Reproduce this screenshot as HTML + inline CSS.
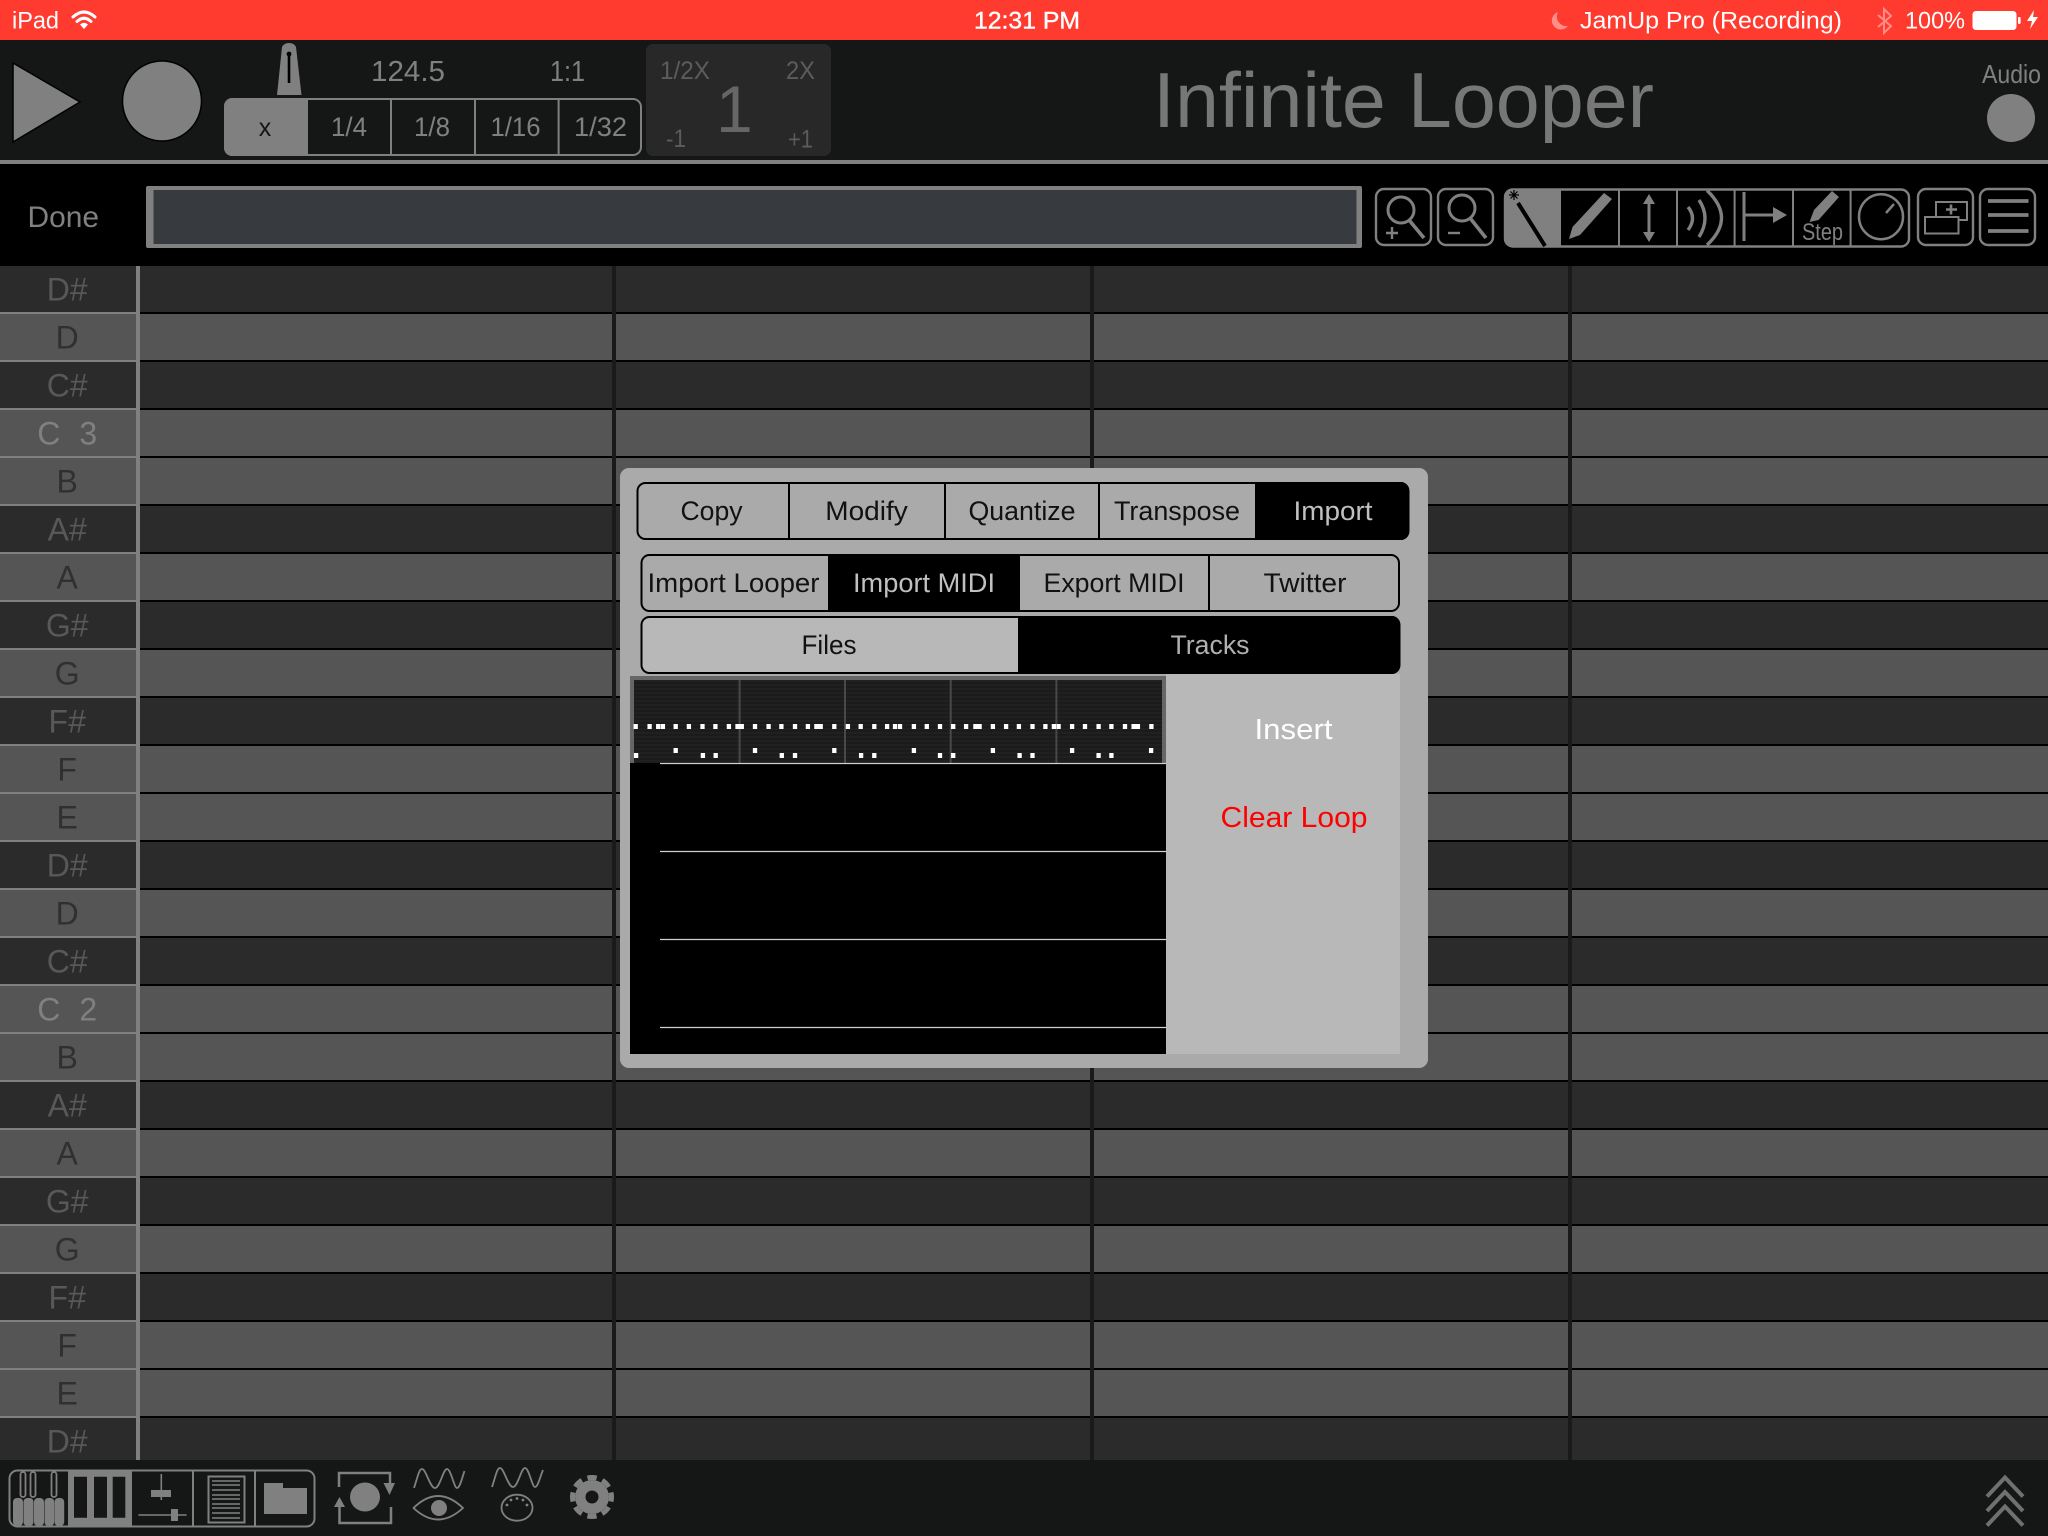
<!DOCTYPE html>
<html lang="en">
<head>
<meta charset="utf-8">
<title>Infinite Looper</title>
<style>
html,body{margin:0;padding:0;width:2048px;height:1536px;overflow:hidden;background:#000}
svg{display:block;position:absolute;left:0;top:0}
text{font-family:"Liberation Sans",sans-serif}
.g{fill:#808080}
.st{fill:none;stroke:#808080}
.m{text-anchor:middle}
</style>
</head>
<body>
<svg width="2048" height="1536" viewBox="0 0 2048 1536" xmlns="http://www.w3.org/2000/svg">
<defs>
<pattern id="sep" patternUnits="userSpaceOnUse" x="0" y="312" width="16" height="48"><rect width="16" height="2" fill="#000"/></pattern>
<pattern id="sepg" patternUnits="userSpaceOnUse" x="0" y="312" width="16" height="48"><rect width="16" height="2" fill="#808080"/></pattern>
<pattern id="tex" patternUnits="userSpaceOnUse" x="0" y="680" width="6" height="4"><rect width="6" height="4" fill="#1b1b1b"/><rect width="6" height="2" fill="#202020"/></pattern>
</defs>

<!-- status bar -->
<rect width="2048" height="40" fill="#ff3b30"/>
<g fill="#fff" font-size="24">
<text x="12" y="28.500" textLength="47" lengthAdjust="spacingAndGlyphs">iPad</text>
<text x="974" y="28.500" textLength="106" lengthAdjust="spacingAndGlyphs" style="stroke:#fff;stroke-width:.4">12:31 PM</text>
<text x="1580" y="28.500" textLength="262" lengthAdjust="spacingAndGlyphs">JamUp Pro (Recording)</text>
<text x="1905" y="28.500" textLength="60" lengthAdjust="spacingAndGlyphs">100%</text>
</g>
<g fill="none" stroke="#fff" stroke-width="3" stroke-linecap="round">
<path d="M73 17Q84 7 95 17"/><path d="M77 21.500Q84 15 91 21.500"/>
</g>
<path d="M80 24.500Q84 21 88 24.500L84 29Z" fill="#fff"/>
<path d="M1558 12A9 9 0 1 0 1568 26A9.500 9.500 0 0 1 1558 12Z" fill="#ff8f88"/>
<path d="M1878 15L1891 26L1884 33V9L1891 16L1878 27" fill="none" stroke="#ff8f88" stroke-width="2"/>
<rect x="1973" y="11.500" width="43" height="18" rx="3" fill="#fff" stroke="#fff"/>
<rect x="2018" y="17" width="2.600" height="7" rx="1" fill="#fff"/>
<path d="M2034 10L2027 21H2032L2030 29L2038 17H2033Z" fill="#fff"/>

<!-- header -->
<rect y="40" width="2048" height="120" fill="#151616"/>
<rect y="160" width="2048" height="4" fill="#808080"/>
<path d="M13 63L80 102L13 142Z" class="g" stroke="#000" stroke-width="1.500"/>
<ellipse cx="162" cy="101" rx="39.500" ry="40" class="g" stroke="#000" stroke-width="1.500"/>
<path d="M277 95L282 47Q284 43 289 43Q294 43 296 47L301.500 95Z" class="g"/>
<path d="M289 53V83" stroke="#000" stroke-width="2.600" fill="none"/>
<circle cx="289" cy="54" r="2.400" fill="#000"/>
<g class="g" font-size="29">
<text x="371" y="81" textLength="74" lengthAdjust="spacingAndGlyphs">124.5</text>
<text x="550" y="81" textLength="35" lengthAdjust="spacingAndGlyphs">1:1</text>
</g>
<rect x="225" y="99" width="416" height="56" rx="8" fill="#151616" stroke="#808080" stroke-width="2"/>
<path d="M308 98H232a8 8 0 0 0 -8 8V148a8 8 0 0 0 8 8H308Z" class="g"/>
<path d="M391 99V155M475 99V155M558.600 99V155" stroke="#808080" stroke-width="2"/>
<g class="g m" font-size="27">
<text x="265" y="136" style="fill:#151616" font-size="25">x</text>
<text x="349" y="136" textLength="36" lengthAdjust="spacingAndGlyphs">1/4</text>
<text x="432" y="136" textLength="36" lengthAdjust="spacingAndGlyphs">1/8</text>
<text x="515.500" y="136" textLength="50" lengthAdjust="spacingAndGlyphs">1/16</text>
<text x="600.500" y="136" textLength="53" lengthAdjust="spacingAndGlyphs">1/32</text>
</g>
<rect x="646" y="44" width="185" height="112" rx="7" fill="#282828"/>
<g fill="#5c5c5c" font-size="25">
<text x="660" y="79" textLength="50" lengthAdjust="spacingAndGlyphs">1/2X</text>
<text x="786" y="79" textLength="29" lengthAdjust="spacingAndGlyphs">2X</text>
<text x="666" y="147" textLength="20" lengthAdjust="spacingAndGlyphs">-1</text>
<text x="788" y="147.500" textLength="25" lengthAdjust="spacingAndGlyphs">+1</text>
<text x="716" y="132" font-size="66" style="fill:#666">1</text>
</g>
<text x="1153" y="127" font-size="78" fill="#777" textLength="501" lengthAdjust="spacingAndGlyphs">Infinite Looper</text>
<text x="1982" y="83" font-size="26" class="g" textLength="59" lengthAdjust="spacingAndGlyphs">Audio</text>
<ellipse cx="2011" cy="118" rx="24" ry="24" class="g"/>

<!-- toolbar row -->
<rect y="164" width="2048" height="102" fill="#000"/>
<text x="27.500" y="227" font-size="30" class="g" textLength="71.500" lengthAdjust="spacingAndGlyphs">Done</text>
<rect x="146" y="186" width="1216" height="62" rx="2" fill="#808080"/>
<rect x="153.500" y="190" width="1203" height="54" fill="#373b3f"/>

<!-- zoom + -->
<rect x="1376" y="189" width="55" height="56" rx="8" class="st" stroke-width="2.400"/>
<circle cx="1401" cy="210" r="13" class="st" stroke-width="3"/>
<path d="M1409 220L1424 238" class="st" stroke-width="3.600"/>
<path d="M1386 233H1398M1392 227V239" class="st" stroke-width="2.400"/>
<!-- zoom - -->
<rect x="1438" y="189" width="55" height="56" rx="8" class="st" stroke-width="2.400"/>
<circle cx="1462" cy="208" r="13" class="st" stroke-width="3"/>
<path d="M1470 218L1486 238" class="st" stroke-width="3.600"/>
<path d="M1448 233H1460" class="st" stroke-width="2.400"/>
<!-- tool segment -->
<rect x="1505" y="189.500" width="404" height="57" rx="8" fill="#000" stroke="#808080" stroke-width="2.400"/>
<path d="M1561 188.500H1512a8 8 0 0 0 -8 8V239a8 8 0 0 0 8 8H1561Z" class="g"/>
<path d="M1619 189V247M1677 189V247M1734.600 189V247M1793 189V247M1850.600 189V247" stroke="#808080" stroke-width="2"/>
<path d="M1518 203L1545 246" stroke="#000" stroke-width="4" fill="none"/>
<path d="M1514 190V200M1509 195H1519M1510.500 191.500L1517.500 198.500M1517.500 191.500L1510.500 198.500" stroke="#000" stroke-width="1.200" fill="none"/>
<path d="M1604 193L1612 199L1580 235L1569 239L1572.500 227Z" class="g"/>
<path d="M1649 200V236" class="st" stroke-width="3"/>
<path d="M1649 194L1655 204H1643ZM1649 242L1655 232H1643Z" class="g"/>
<path d="M1688 207Q1697 218 1688 230" class="st" stroke-width="3.400"/>
<path d="M1699 200Q1711 218 1699 237" class="st" stroke-width="3.400"/>
<path d="M1707 190.500Q1736 218 1707 245" class="st" stroke-width="3.400"/>
<path d="M1744 192V241" class="st" stroke-width="3"/>
<path d="M1744 215H1774" class="st" stroke-width="3"/>
<path d="M1773 207L1787 215L1773 223Z" class="g"/>
<path d="M1832 191L1839 197L1818.500 220L1809.500 222L1814 210Z" class="g"/>
<text x="1802" y="240" font-size="24" class="g" textLength="41" lengthAdjust="spacingAndGlyphs">Step</text>
<ellipse cx="1881" cy="216.700" rx="22" ry="22.500" class="st" stroke-width="2.500"/>
<path d="M1886 213L1894 204" class="st" stroke-width="2.500"/>
<!-- add -->
<rect x="1918" y="189" width="55" height="56" rx="8" class="st" stroke-width="2.400"/>
<rect x="1936" y="202" width="31" height="18" class="st" stroke-width="2"/>
<path d="M1946 209.500H1957M1951 204.500V214.500" class="st" stroke-width="2.600"/>
<rect x="1925" y="217" width="33.500" height="16.500" fill="#000" stroke="#808080" stroke-width="2"/>
<!-- menu -->
<rect x="1980" y="189" width="55" height="56" rx="8" class="st" stroke-width="2.400"/>
<path d="M1988 201H2028.500M1988 215H2028.500M1988 231H2028.500" class="st" stroke-width="3.800"/>

<!-- grid -->
<rect y="266" width="2048" height="1194" fill="#2b2b2b"/>
<g fill="#555">
<rect y="314" width="2048" height="46"/><rect y="410" width="2048" height="46"/><rect y="458" width="2048" height="46"/>
<rect y="554" width="2048" height="46"/><rect y="650" width="2048" height="46"/><rect y="746" width="2048" height="46"/>
<rect y="794" width="2048" height="46"/><rect y="890" width="2048" height="46"/><rect y="986" width="2048" height="46"/>
<rect y="1034" width="2048" height="46"/><rect y="1130" width="2048" height="46"/><rect y="1226" width="2048" height="46"/>
<rect y="1322" width="2048" height="46"/><rect y="1370" width="2048" height="46"/>
</g>
<rect x="140" y="312" width="1908" height="1106" fill="url(#sep)"/>
<rect x="0" y="312" width="136" height="1106" fill="url(#sepg)"/>
<rect x="136" y="266" width="4" height="1194" fill="#808080"/>
<path d="M614 266V1460M1092 266V1460M1570 266V1460" stroke="#1a1a1a" stroke-width="4"/>

<g font-size="32" class="m" transform="translate(-0.800,-0.600)">
<g fill="#585858">
<text x="68" y="301">D#</text><text x="68" y="397">C#</text><text x="68" y="541">A#</text><text x="68" y="637">G#</text><text x="68" y="733">F#</text>
<text x="68" y="877">D#</text><text x="68" y="973">C#</text><text x="68" y="1117">A#</text><text x="68" y="1213">G#</text><text x="68" y="1309">F#</text><text x="68" y="1453">D#</text>
</g>
<g fill="#303030">
<text x="68" y="349">D</text><text x="68" y="493">B</text><text x="68" y="589">A</text><text x="68" y="685">G</text><text x="68" y="781">F</text><text x="68" y="829">E</text>
<text x="68" y="925">D</text><text x="68" y="1069">B</text><text x="68" y="1165">A</text><text x="68" y="1261">G</text><text x="68" y="1357">F</text><text x="68" y="1405">E</text>
</g>
<g fill="#808080">
<text x="68" y="445" textLength="60" lengthAdjust="spacing">C&#160;&#160;3</text>
<text x="68" y="1021" textLength="60" lengthAdjust="spacing">C&#160;&#160;2</text>
</g>
</g>

<!-- modal -->
<rect x="620" y="468" width="808" height="600" rx="9" fill="#aaa"/>
<!-- seg1 -->
<rect x="637.500" y="483" width="771" height="56" rx="8" fill="#aaa" stroke="#000" stroke-width="2"/>
<path d="M1255 482H1401a8 8 0 0 1 8 8V532a8 8 0 0 1 -8 8H1255Z" fill="#000"/>
<path d="M789 483V539M945 483V539M1099 483V539" stroke="#000" stroke-width="2"/>
<g font-size="27" fill="#111" class="m">
<text x="711.500" y="520" textLength="62" lengthAdjust="spacingAndGlyphs">Copy</text>
<text x="866.500" y="520" textLength="82.500" lengthAdjust="spacingAndGlyphs">Modify</text>
<text x="1022" y="520" textLength="107" lengthAdjust="spacingAndGlyphs">Quantize</text>
<text x="1177" y="520" textLength="126" lengthAdjust="spacingAndGlyphs">Transpose</text>
<text x="1333" y="520" textLength="79" lengthAdjust="spacingAndGlyphs" fill="#c0c0c0">Import</text>
</g>
<!-- seg2 -->
<rect x="641.500" y="555" width="757.500" height="56" rx="8" fill="#aaa" stroke="#000" stroke-width="2"/>
<rect x="828" y="554" width="192" height="58" fill="#000"/>
<path d="M1209 555V611" stroke="#000" stroke-width="2"/>
<g font-size="27" fill="#111" class="m">
<text x="733.500" y="592" textLength="172" lengthAdjust="spacingAndGlyphs">Import Looper</text>
<text x="924" y="592" textLength="142" lengthAdjust="spacingAndGlyphs" fill="#c0c0c0">Import MIDI</text>
<text x="1114" y="592" textLength="141" lengthAdjust="spacingAndGlyphs">Export MIDI</text>
<text x="1305" y="592" textLength="83" lengthAdjust="spacingAndGlyphs">Twitter</text>
</g>
<!-- seg3 -->
<rect x="641.500" y="617" width="758" height="56" rx="8" fill="#b8b8b8" stroke="#000" stroke-width="2"/>
<path d="M1018 616H1392a8 8 0 0 1 8 8V666a8 8 0 0 1 -8 8H1018Z" fill="#000"/>
<g font-size="27" fill="#111" class="m">
<text x="829" y="654" textLength="55" lengthAdjust="spacingAndGlyphs">Files</text>
<text x="1210" y="654" textLength="79" lengthAdjust="spacingAndGlyphs" fill="#b0b0b0">Tracks</text>
</g>
<!-- content -->
<rect x="1166" y="674" width="234" height="380" fill="#b8b8b8"/>
<rect x="630" y="676" width="536" height="378" fill="#000"/>
<rect x="630" y="676" width="536" height="87" fill="#666"/>
<rect x="634" y="680" width="528" height="83" fill="url(#tex)"/>
<path d="M739.600 680V763M845 680V763M950.700 680V763M1056.400 680V763" stroke="#484848" stroke-width="2"/>
<path fill="none" stroke="#fff" stroke-width="4.300" d="M635.700 724v5M649.600 724v5M658.200 724v5M662.900 724v5M675.700 724v5M688.900 724v5M702.500 724v5M715.400 724v5M728.900 724v5M737.500 724v5M741.800 724v5M755 724v5M768.600 724v5M781.400 724v5M795 724v5M807.900 724v5M816.400 724v5M820.700 724v5M834.300 724v5M847.900 724v5M860.700 724v5M874.300 724v5M887.100 724v5M895 724v5M900 724v5M913.900 724v5M926.800 724v5M940 724v5M953.200 724v5M966.100 724v5M975.400 724v5M979.600 724v5M992.900 724v5M1006.100 724v5M1018.900 724v5M1032.500 724v5M1045.400 724v5M1053.900 724v5M1058.600 724v5M1072.100 724v5M1085 724v5M1098.600 724v5M1111.400 724v5M1125 724v5M1133.600 724v5M1137.900 724v5M1151.400 724v5
M675.700 748v5M755 748v5M834.300 748v5M913.900 748v5M992.900 748v5M1072.100 748v5M1151.100 748v5
M636.100 753v5M702.900 753v5M715.700 753v5M781.800 753v5M795 753v5M861.100 753v5M874.300 753v5M940 753v5M953.200 753v5M1019.600 753v5M1032.500 753v5M1098.600 753v5M1111.400 753v5"/>
<path d="M660 763.500H1166M660 851.500H1166M660 939.500H1166M660 1027.500H1166" stroke="#d0d0d0" stroke-width="1.200"/>
<text x="1293.500" y="739" font-size="29" fill="#fff" class="m" textLength="78" lengthAdjust="spacingAndGlyphs">Insert</text>
<text x="1294" y="827" font-size="29" fill="#f00" class="m" textLength="147" lengthAdjust="spacingAndGlyphs">Clear Loop</text>

<!-- bottom bar -->
<rect y="1460" width="2048" height="76" fill="#151616"/>
<rect x="9.500" y="1470.500" width="305" height="56" rx="8" fill="none" stroke="#808080" stroke-width="2"/>
<rect x="68" y="1470" width="64" height="57" class="g"/>
<path d="M74 1476.700h13v41h-13zM94 1476.700h13v41h-13zM112.700 1476.700h12.600v41h-12.600z" fill="#151616"/>
<path d="M193 1471V1527M255 1471V1527" stroke="#808080" stroke-width="2"/>
<!-- piano -->
<g class="g">
<rect x="13" y="1498" width="10" height="28" rx="4"/><rect x="23.500" y="1498" width="10" height="28" rx="4"/>
<rect x="34" y="1498" width="10" height="28" rx="4"/><rect x="44.500" y="1498" width="9.700" height="28" rx="4"/>
<rect x="54.500" y="1498" width="9.700" height="28" rx="4"/>
</g>
<g class="st" stroke-width="1.800">
<rect x="20.500" y="1472" width="5" height="25" rx="2.500"/><rect x="30.500" y="1472" width="5" height="25" rx="2.500"/><rect x="51.500" y="1472" width="5" height="25" rx="2.500"/>
</g>
<!-- mixer -->
<path d="M161.300 1474V1500M138.400 1515H186.600" class="st" stroke-width="1.600"/>
<rect x="151" y="1490" width="20" height="7" class="g"/>
<rect x="171" y="1509" width="7" height="12" class="g"/>
<!-- list -->
<rect x="208.500" y="1476.500" width="36" height="46" class="st" stroke-width="2"/>
<path d="M212 1481H240M212 1485H240M212 1490H240M212 1495H240M212 1499H240M212 1504H240M212 1508H240M212 1513H240M212 1518H240" class="st" stroke-width="1.500"/>
<!-- folder -->
<path d="M264 1514V1483H283V1488H307V1514Z" class="g"/>
<!-- loop -->
<path d="M339 1487V1473H390V1484" class="st" stroke-width="2.500"/>
<path d="M391 1507V1523H339.500V1507" class="st" stroke-width="2.500"/>
<path d="M383.500 1483H395L389.500 1495ZM334 1507H345L339.500 1497Z" class="g"/>
<ellipse cx="365" cy="1497" rx="15" ry="14.500" class="g"/>
<!-- waves -->
<path d="M414 1488C418 1476 419 1469 422 1469C426 1469 430 1488 435 1488C440 1488 443 1469 447 1469C451 1469 454 1488 457 1488C460 1488 462 1478 464.500 1471" class="st" stroke-width="1.800"/>
<path d="M492 1487C496 1475 497 1468 500 1468C504 1468 508 1487 513 1487C518 1487 521 1468 525 1468C529 1468 532 1487 535 1487C538 1487 540 1477 543 1470" class="st" stroke-width="1.800"/>
<path d="M413.500 1508Q438 1484 463 1508Q438 1531 413.500 1508Z" class="st" stroke-width="1.800"/>
<circle cx="439" cy="1508" r="8" class="g"/>
<ellipse cx="517" cy="1507.700" rx="15.500" ry="13" class="st" stroke-width="1.800"/>
<g class="g"><circle cx="507" cy="1505" r="1.400"/><circle cx="511" cy="1500" r="1.400"/><circle cx="517" cy="1498.500" r="1.400"/><circle cx="523" cy="1500" r="1.400"/><circle cx="527" cy="1505" r="1.400"/></g>
<!-- gear -->
<circle cx="592" cy="1497" r="17" class="g"/>
<circle cx="592" cy="1497" r="19.500" fill="none" stroke="#808080" stroke-width="5" stroke-dasharray="9.300 6" stroke-dashoffset="4.650"/>
<circle cx="592" cy="1497" r="6.500" fill="#151616"/>
<!-- chevrons -->
<path d="M1987 1496.500L2005 1477.500L2023 1496.500M1987 1511L2005 1492L2023 1511M1987 1525.500L2005 1506.500L2023 1525.500" fill="none" stroke="#707070" stroke-width="4"/>
</svg>
</body>
</html>
